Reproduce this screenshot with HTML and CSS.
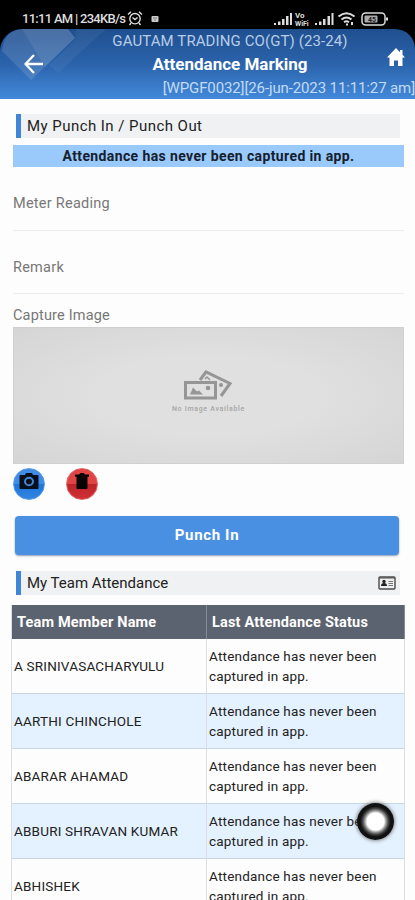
FILE: index.html
```html
<!DOCTYPE html>
<html lang="en">
<head>
<meta charset="utf-8">
<title>Attendance Marking</title>
<link rel="stylesheet" href="styles.css">
</head>
<body>
<div class="top">
<div class="status">
  <span class="clock">11:11 AM | 234KB/s</span>
  <svg class="alarm" width="16" height="16" viewBox="0 0 16 16" fill="none" stroke="#ddd" stroke-width="1.4"><circle cx="8" cy="8.7" r="5.2"/><path d="M1 4.5 4 1.7M15 4.5 12 1.7M5.500 7.500 8 9.500l2.500-2M4 13l-1.500 2M12 13l1.500 2"/></svg>
  <svg class="note" width="8" height="8" viewBox="0 0 8 8"><rect width="7" height="6" x=".5" y="1" rx="1" fill="#ccc"/><path d="M2 3h4M3 5h2" stroke="#777"/></svg>
  <svg class="signals" width="118" height="18" viewBox="0 0 118 18">
    <g fill="#ddd"><path d="M1 14h2v2H1zM5 12.500h2.500V16H5zM9 10h2.500v6H9zM13 7h2.500v9H13zM17 4h2v12h-2z"/><path d="M42 14h2v2h-2zM46 12.500h2.500V16H46zM50 10h2.500v6H50zM54.500 7H57v9h-2.500zM58.500 4h2v12h-2z"/></g>
    <text x="22" y="9" class="vo">Vo</text><text x="22" y="17" class="wifi">WiFi</text>
    <g fill="none" stroke="#ddd" stroke-width="2"><path d="M65.500 7.500q8-6.500 16 0M68.500 10.500q5-4 10 0M71 13.200q2.500-1.800 5 0"/><rect x="89" y="4" width="23" height="12" rx="3.500" stroke-width="1.500"/></g>
    <rect x="91.500" y="6.500" width="13" height="7" rx="1" fill="#aaa"/><path d="M73 14.500h2v2h-2zM78 13h2v3h-2zM113 8.500h2v3h-2z" fill="#ddd"/><text x="95" y="13" class="charge">45</text>
  </svg>
</div>
<header class="bar">
  <svg class="facets" width="110" height="69" viewBox="0 0 110 69"><path d="M18 0h50l7 9-44 42L2 22Q4 4 18 0z" fill="#fff" opacity=".12"/><path d="M22 0h46l7 9-30 29z" fill="#fff" opacity=".08"/><path d="M76 0h30L58 44l-9-8 26-25z" fill="#fff" opacity=".05"/></svg>
  <svg class="back" width="20" height="20" viewBox="0 0 20 20" fill="none" stroke="#fff" stroke-width="2.300"><path d="M19 10H2M10 1 1.500 10l8.500 9"/></svg>
  <div class="titles">
    <div class="company"><span>GAUTAM TRADING CO(GT) (23-24)</span></div>
    <h1><span>Attendance Marking</span></h1>
    <div class="session"><span>[WPGF0032][26-jun-2023 11:11:27 am]</span></div>
  </div>
  <svg class="home" width="18" height="18" viewBox="0 0 18 18" fill="#fff"><path d="M9 0 0 9.500h2.500V18H7v-5.500h4V18h4.500V9.500H18l-2.500-2.700V2H13v2.200z"/></svg>
</header>
</div>
<main>
  <section class="section first"><span>My Punch In / Punch Out</span></section>
  <div class="notice"><span>Attendance has never been captured in app.</span></div>
  <div class="field meter"><span>Meter Reading</span></div>
  <div class="field remark"><span>Remark</span></div>
  <div class="caption"><span>Capture Image</span></div>
  <div class="preview">
    <svg width="52" height="32" viewBox="0 0 52 32" fill="none" stroke="#969696"><path d="m17 10 6-8 24 11.500-9 12.500" stroke-width="3"/><circle cx="38" cy="15" r="2" fill="#969696" stroke="none"/><path d="m22 9 2-2 3 3" stroke-width="1.500"/><rect x="2.500" y="12.500" width="30" height="15.500" stroke-width="3"/><path d="m7 24.500 3-7 4 4 2-1 4 4z" fill="#969696" stroke="none"/><circle cx="25" cy="18" r="2.300" fill="#969696" stroke="none"/></svg>
    <span>No Image Available</span>
  </div>
  <div class="actions">
    <button class="round blue" aria-label="Capture"><svg width="20" height="17" viewBox="0 0 20 18" preserveAspectRatio="none"><path d="M1.500 2H6l1-2h6l1 2h4.500q1 0 1 1v13q0 1-1 1h-17q-1 0-1-1V3q0-1 1-1z" fill="#07101c"/><circle cx="10" cy="9" r="4" fill="none" stroke="#4386d6" stroke-width="2"/></svg></button>
    <button class="round red" aria-label="Delete"><svg width="16" height="17" viewBox="0 0 16 18" preserveAspectRatio="none" fill="#090303"><path d="M1 1.500h4L6.500 0h3L11 1.500h4V4H1zM2.500 4h11v12q0 1-1 1h-9q-1 0-1-1z"/></svg></button>
  </div>
  <button class="punch"><span>Punch In</span></button>
  <section class="section team"><span>My Team Attendance</span>
    <svg width="18" height="14" viewBox="0 0 18 14"><rect x="1" y="1" width="16" height="12" rx="1" fill="#eee" stroke="#4a4a4a" stroke-width="1.400"/><path d="M1 2h16" stroke="#4a4a4a"/><circle cx="6" cy="5.500" r="1.700" fill="#222"/><path d="M3 10q0-3 3-3t3 3z" fill="#222"/><path d="M10.500 5.500H15M10.500 7.500H15M10.500 9.500H15" stroke="#666" stroke-width=".9"/></svg>
  </section>
  <table>
    <thead><tr><th>Team Member Name</th><th>Last Attendance Status</th></tr></thead>
    <tbody>
      <tr><td>A SRINIVASACHARYULU</td><td>Attendance has never been<br>captured in app.</td></tr>
      <tr><td>AARTHI CHINCHOLE</td><td>Attendance has never been<br>captured in app.</td></tr>
      <tr><td>ABARAR AHAMAD</td><td>Attendance has never been<br>captured in app.</td></tr>
      <tr><td>ABBURI SHRAVAN KUMAR</td><td>Attendance has never been<br>captured in app.</td></tr>
      <tr><td>ABHISHEK</td><td>Attendance has never been<br>captured in app.</td></tr>
    </tbody>
  </table>
</main>
<div class="assist"></div>
</body>
</html>
```
FILE: styles.css
```css
* { box-sizing: border-box; }
html, body { margin: 0; height: 900px; overflow: hidden; }
body { background: #fdfdfd; font-family: Roboto, sans-serif; color: #222; position: relative; }
svg { display: block; flex: none; }
span { white-space: nowrap; }
button { border: 0; padding: 0; font-family: inherit; }

.top { background: #000; }
.status { height: 29px; padding: 10px 24px 0 22px; color: #ddd; display: flex; align-items: flex-start; }
.clock { font-size: 13px; line-height: 18px; width: 105px; letter-spacing: -.72px; font-weight: 500; }
.note { margin: 5px 0 0 8px; }
.signals { margin-left: auto; margin-top: -1px; }
.vo, .wifi { fill: #ddd; font-size: 8px; font-weight: 700; }
.wifi { font-size: 7px; }
.charge { fill: #222; font-size: 7px; font-weight: 700; }

.bar { position: relative; height: 70px; border-radius: 22px 20px 0 0; background: linear-gradient(#1f4f8f, #2b63ab 50%, #4289da); overflow: hidden; display: flex; color: #fff; }
.facets { position: absolute; left: 0; top: 0; }
.back { position: relative; margin: 25px 0 0 24px; }
.titles { position: relative; flex: 1; margin-left: -44px; margin-right: -28px; text-align: center; }
.company { height: 23px; font-size: 15px; line-height: 24px; color: #b8cce7; padding-left: 45px; letter-spacing: .1px; }
h1 { margin: 0; height: 24px; font-size: 17px; line-height: 24px; font-weight: 700; padding-left: 45px; }
.session { height: 22px; font-size: 15px; line-height: 25px; color: #c2daf5; text-align: right; letter-spacing: -.12px; }
.home { position: relative; margin: 19px 10px 0 0; }

main { padding: 15px 11px 0 12px; }
.section { height: 24px; margin-left: 4px; margin-right: 4px; border-left: 5px solid #3f86d8; background: #f0f1f2; padding-left: 6px; font-size: 15px; line-height: 23px; display: flex; justify-content: space-between; align-items: center; }
.first { letter-spacing: .45px; }
.notice { margin: 7px 0 0 1px; height: 22px; background: #9ac9fb; text-align: center; font-size: 14px; line-height: 22px; font-weight: 700; color: #14202e; letter-spacing: .38px; }
.field { margin-left: 1px; border-bottom: 1.5px solid #ececec; color: #777; font-size: 14.500px; line-height: 18px; letter-spacing: .25px; }
.meter { height: 64px; padding-top: 28px; }
.remark { height: 63px; padding-top: 28px; }
.caption { margin-left: 1px; height: 33px; padding-top: 13px; font-size: 14.500px; line-height: 18px; color: #777; letter-spacing: .18px; }
.preview { margin-left: 1px; height: 137px; background: radial-gradient(#e0e0e0 40%, #d5d5d5); border: 1px solid #d0d0d0; display: flex; flex-direction: column; align-items: center; padding-top: 42px; }
.preview span { font-size: 7px; line-height: 10px; margin-top: 2px; color: #a5a5a5; letter-spacing: .7px; font-weight: 500; }
.actions { height: 35px; padding: 4px 0 0 1px; display: flex; gap: 21px; }
.round { width: 32px; height: 32px; border-radius: 50%; display: flex; justify-content: center; padding-top: 4px; }
.blue { background: linear-gradient(#3f8ce6 50%, #1d76da 50%, #3285e0); border: 1px solid #5a9ce8; }
.red { background: linear-gradient(#e04444 50%, #bc2428 50%, #d03035); border: 1px solid #dd6868; }
.punch { display: block; width: 384px; height: 39px; margin: 17px 0 0 3px; border-radius: 4px; background: #4990e2; color: #fff; font-size: 15px; line-height: 37px; font-weight: 700; letter-spacing: .65px; box-shadow: 0 1px 2px #8b9bb0; }
.team { margin-top: 16px; line-height: 24px; }
.team svg { margin-right: 4px; }
table { border-collapse: separate; border-spacing: 0; table-layout: fixed; width: 394px; margin: 10px -1px 0 -1px; border-left: 1px solid #dadfe3; }
th { height: 34px; padding: 1px 0 0 5px; background: #5c6370; color: #fff; font-size: 14.500px; line-height: 20px; text-align: left; border-right: 1px solid #858b94; letter-spacing: .18px; }
td { height: 55px; padding: 0 0 0 2px; border-right: 1px solid #dadfe3; border-bottom: 1px solid #c9d7e3; font-size: 13.500px; line-height: 20px; letter-spacing: .2px; }
th:first-child, td:first-child { width: 195px; }
tbody tr:nth-child(even) td { background: #e4f1fe; }

.assist { position: absolute; left: 357px; top: 803px; width: 37px; height: 37px; border-radius: 50%; background: radial-gradient(circle closest-side, #fff 46%, #999 58%, #444 70%, #111 82%, #111); box-shadow: 0 0 4px #555; }
```
